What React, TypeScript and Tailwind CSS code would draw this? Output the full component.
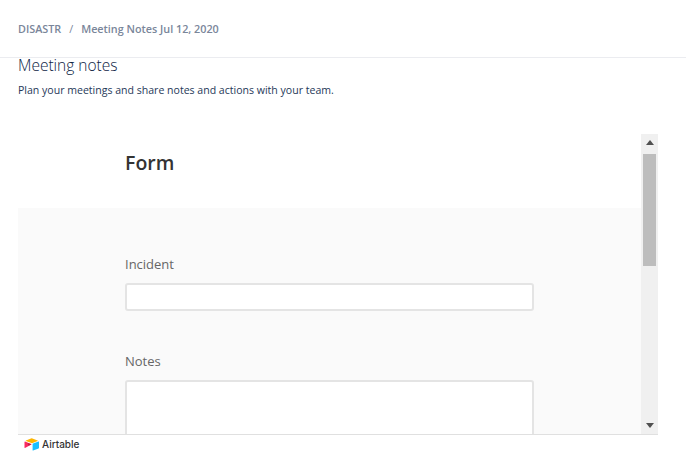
import React from "react";

const AirtableLogo = () => (
  <svg width="16" height="13" viewBox="0 0 16 13" className="block">
    <path d="M7 0.4 L1.9 2.4 Q1.5 2.7 1.9 3 L7.4 5.1 Q8 5.3 8.6 5.1 L13.6 3 Q14 2.7 13.6 2.4 L8.4 0.4 Q7.7 0.1 7 0.4 Z" fill="#fcb400" />
    <path d="M8.6 6.2 V12.2 Q8.6 12.7 9.1 12.5 L14.6 10.4 Q15 10.2 15 9.8 V3.9 Q15 3.4 14.5 3.6 L9 5.6 Q8.6 5.8 8.6 6.2 Z" fill="#18bfff" />
    <path d="M7.3 6 L1 3.6 Q0.5 3.5 0.5 4 V9.6 Q0.5 10.1 1 9.9 L7.3 6.6 Q7.7 6.3 7.3 6 Z" fill="#f82b60" />
    <path d="M7.3 6.3 L4.6 7.7 L3.6 5 Z" fill="#ba1e45" />
  </svg>
);

export default function App() {
  return (
    <div className="w-[686px] h-[461px] overflow-hidden bg-white font-['Open_Sans',sans-serif]">
      <div className="h-[58px] border-b border-[#ebecf0] pl-[18px] pt-[21px]">
        <div className="flex items-center text-[10.8px] leading-4 font-semibold text-[#7a869a]">
          <span>DISASTR</span>
          <span className="mx-[8px] font-normal">/</span>
          <span>Meeting Notes Jul 12, 2020</span>
        </div>
      </div>

      <div className="pl-[18px]">
        <h1 className="text-[15.5px] leading-[17px] font-light text-[#0c2344] -mt-px">Meeting notes</h1>
        <p className="text-[10.55px] leading-[14px] text-[#253858] mt-[9px]">
          Plan your meetings and share notes and actions with your team.
        </p>

        <div className="mt-[37px] w-[640px] h-[301px] border-b border-[#e0e0e0] flex">
          <div className="w-[623px] h-[300px] overflow-hidden flex flex-col">
            <div className="h-[74px] shrink-0 pl-[107px] pt-[13px]">
              <h2 className="text-[19.5px] leading-[31px] font-semibold text-[#333333]">Form</h2>
            </div>
            <div className="flex-1 bg-[#fafafa] pl-[107px] pt-[47px]">
              <label className="block text-[13px] leading-[18px] text-[#666666]">Incident</label>
              <div className="mt-[10px] w-[409px] h-[28px] bg-white border-2 border-[#e4e4e4] rounded-[3px]" />
              <label className="block mt-[41px] text-[13px] leading-[18px] text-[#666666]">Notes</label>
              <div className="mt-[10px] w-[409px] h-[100px] bg-white border-2 border-[#e4e4e4] rounded-[3px]" />
            </div>
          </div>
          <div className="w-[17px] h-[300px] bg-[#f0f0f0] flex flex-col items-center">
            <div className="h-[17px] w-full flex items-center justify-center">
              <svg width="8" height="5" viewBox="0 0 8 5"><path d="M4 0 L8 5 H0 Z" fill="#505050" /></svg>
            </div>
            <div className="mt-[3px] w-[13px] h-[112px] bg-[#bdbdbd]" />
            <div className="mt-auto h-[17px] w-full flex items-center justify-center">
              <svg width="8" height="5" viewBox="0 0 8 5"><path d="M4 5 L8 0 H0 Z" fill="#505050" /></svg>
            </div>
          </div>
        </div>

        <div className="pl-[6px] pt-[3px] flex items-center gap-[2px]">
          <AirtableLogo />
          <span className="text-[10px] leading-[13px] font-medium text-[#333333] font-['Inter',sans-serif]">Airtable</span>
        </div>
      </div>
    </div>
  );
}
